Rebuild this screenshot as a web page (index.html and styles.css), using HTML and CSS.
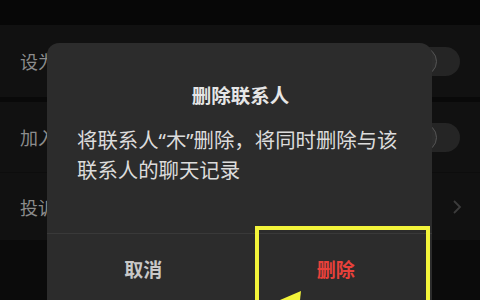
FILE: index.html
```html
<!DOCTYPE html>
<html>
<head>
  <meta charset="utf-8">
  <title>删除联系人</title>
  <link rel="stylesheet" href="styles.css">
</head>
<body>
  <div class="page">
    <div class="top-bar"></div>
    <div class="settings">
      <div class="row">
        <span class="row-label">设为星标朋友</span>
        <span class="switch"><span class="knob"></span></span>
      </div>
      <div class="row row-second">
        <span class="row-label">加入黑名单</span>
        <span class="switch"><span class="knob"></span></span>
      </div>
      <div class="row row-third">
        <span class="row-label">投诉</span>
        <span class="chevron">
          <svg width="10" height="16" viewBox="0 0 10 16"><path d="M2 2 L8 8 L2 14" fill="none" stroke="#3c3c3c" stroke-width="1.8"/></svg>
        </span>
      </div>
    </div>
  </div>

  <!-- 弹窗 -->
  <div class="dialog">
    <div class="dialog-body">
      <h2 class="dialog-title">删除联系人</h2>
      <p class="dialog-text">将联系人“木”删除，将同时删除与该联系人的聊天记录</p>
    </div>
    <div class="dialog-actions">
      <button class="btn btn-cancel">取消</button>
      <button class="btn btn-delete">删除</button>
    </div>
  </div>

  <!-- 标注 -->
  <div class="highlight"></div>
  <svg class="pointer" width="40" height="14" viewBox="0 0 40 14">
    <polygon points="31,0 10,9 30,9" fill="#f3f43a"/>
  </svg>
</body>
</html>
```

FILE: styles.css
```css
body {
  margin: 0;
  width: 480px;
  height: 300px;
  overflow: hidden;
  background: #0b0b0b;
  font-family: "Noto Sans", "Noto Sans CJK SC", sans-serif;
  position: relative;
}
.top-bar {
  height: 25px;
  background: #070707;
}
.settings {
  background: #090909;
}
.row {
  display: flex;
  align-items: center;
  justify-content: space-between;
  height: 72px;
  padding: 0 20px;
  background: #111111;
}
.row-second {
  margin-top: 5px;
  height: 70px;
  border-bottom: 1px solid #0d0d0d;
}
.row-third {
  height: 67px;
}
.row-label {
  color: #8c8c8c;
  font-size: 18px;
}
.switch {
  position: relative;
  width: 52px;
  height: 29px;
  border-radius: 15px;
  background: #252525;
}
.knob {
  position: absolute;
  left: 0;
  top: 0;
  width: 27px;
  height: 27px;
  border-radius: 50%;
  background: #2e2e2e;
  border: 1px solid #555;
}
.chevron {
  display: flex;
  margin-right: -2px;
}
.dialog {
  position: absolute;
  left: 47px;
  top: 43px;
  width: 385px;
  height: 290px;
  background: #2c2c2c;
  border-radius: 12px;
  display: flex;
  flex-direction: column;
}
.dialog-body {
  height: 190px;
  padding: 0 28px 0 30px;
  box-sizing: border-box;
}
.dialog-title {
  margin: 39px 0 0;
  text-align: center;
  font-size: 19.5px;
  line-height: 28px;
  font-weight: bold;
  color: #e6e6e6;
}
.dialog-text {
  margin: 15px 0 0;
  font-size: 20.4px;
  line-height: 30px;
  color: #dcdcdc;
}
.dialog-actions {
  display: grid;
  grid-template-columns: 1fr 1fr;
  height: 70px;
  border-top: 1px solid #393939;
}
.btn {
  background: none;
  border: none;
  font-family: inherit;
  font-size: 19px;
  font-weight: bold;
  padding: 0;
}
.btn-cancel {
  color: #c8c8c8;
}
.btn-delete {
  color: #e8413b;
}
.highlight {
  position: absolute;
  left: 255px;
  top: 226px;
  width: 175px;
  height: 100px;
  box-sizing: border-box;
  border: 4px solid #f3f43a;
}
.pointer {
  position: absolute;
  left: 270px;
  top: 291px;
}
```
